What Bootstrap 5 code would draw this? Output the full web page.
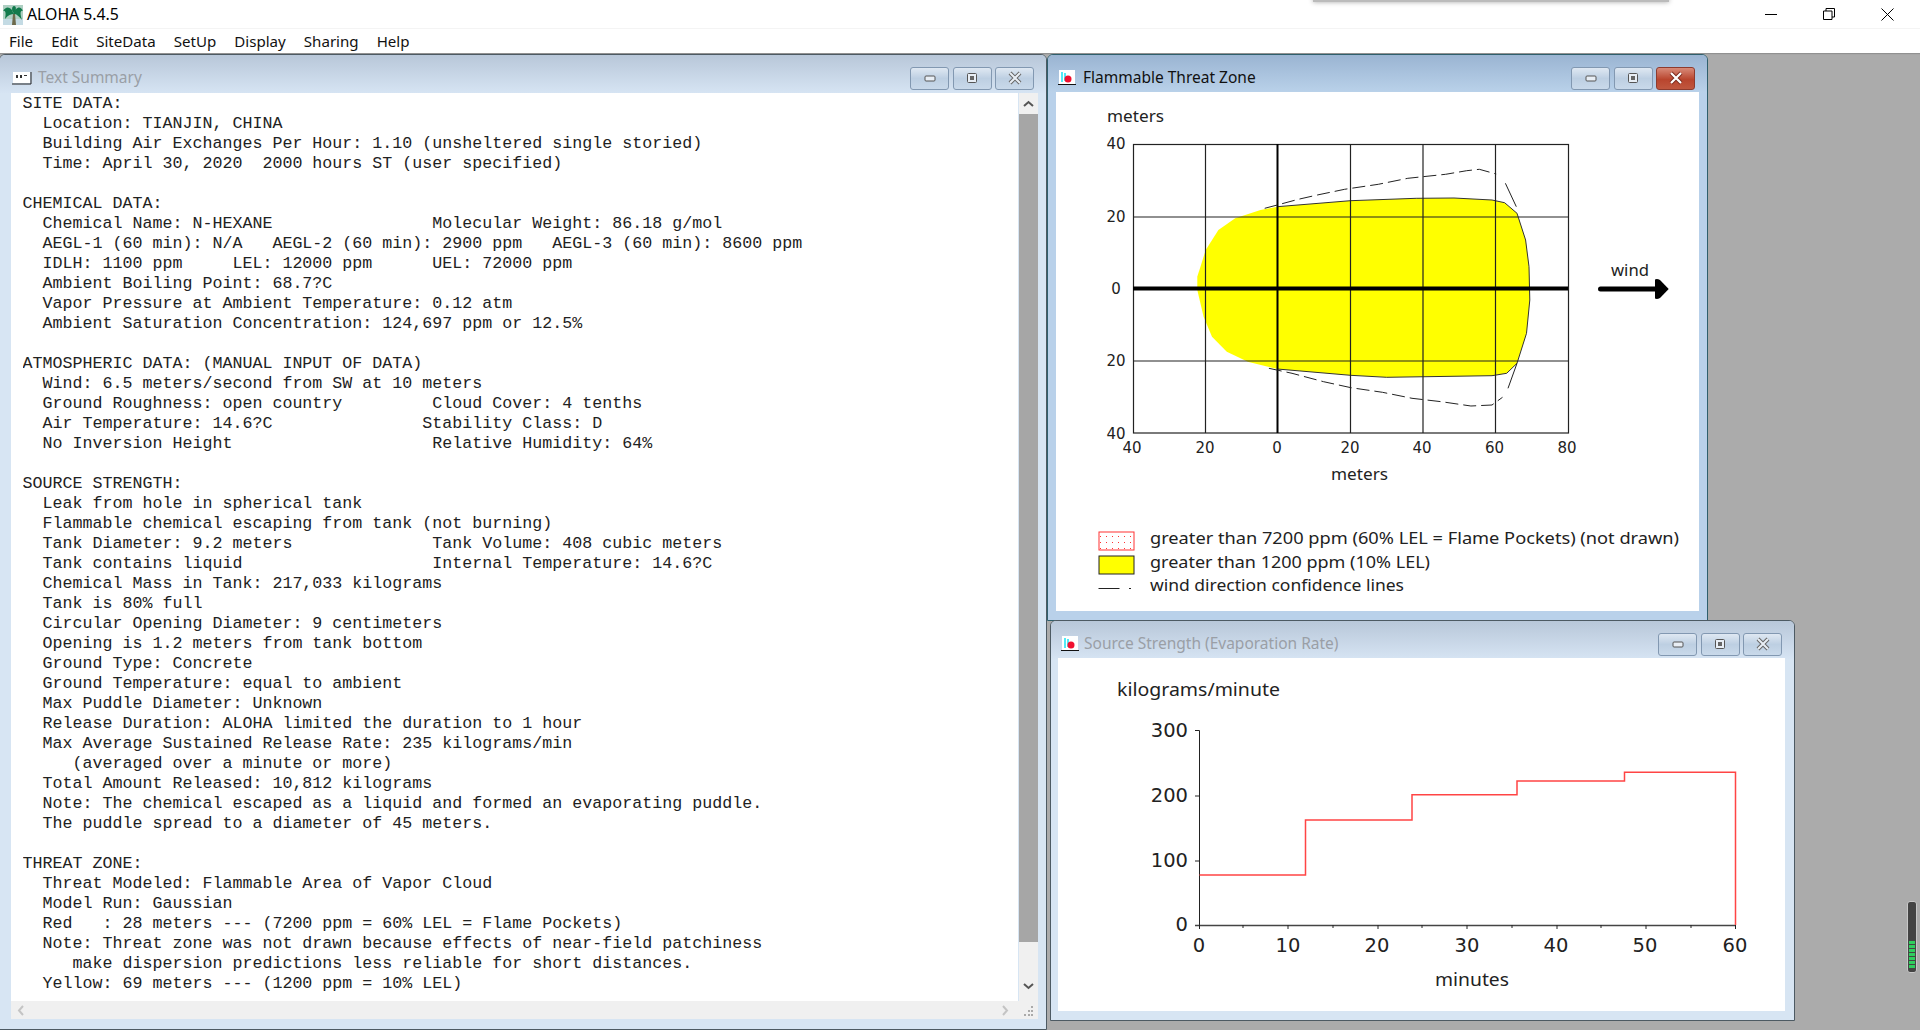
<!doctype html>
<html lang="en">
<head>
<meta charset="utf-8">
<title>ALOHA 5.4.5</title>
<link href="https://cdn.jsdelivr.net/npm/bootstrap@5.3.0/dist/css/bootstrap.min.css" rel="stylesheet">
<style>
html,body{height:100%;overflow:hidden}
body{background:#ababab;font-family:"Noto Sans","Liberation Sans",sans-serif;color:#111}
.appbar{height:53px;background:#fff;box-shadow:0 1px 1px rgba(0,0,0,.15);position:relative}
.captionrow{height:29px;border-bottom:1px solid #f4f4f4}
.appname{font-size:15.8px;margin-left:4px;line-height:28px;color:#000}
.palm{margin-left:3px;margin-top:1px}
.sysbtns{margin-right:26px;gap:46px}
.menurow{height:24px;padding-left:9px;gap:18px;font-size:15.1px;line-height:24px;color:#111}
.topshadow{position:absolute;left:1313px;top:-3px;width:356px;height:5px;background:#bbb;box-shadow:0 0 5px rgba(0,0,0,.35)}
.winframe{position:absolute;border:1px solid #4d5a63;border-radius:6px 6px 0 0;background:#d7e5f3;overflow:hidden}
.winframe.act{background:#b9d1ea;border-color:#2f5f6c}
.w-text{left:-1px;top:54px;width:1048px;height:976px}
.w-threat{left:1047px;top:54px;width:661px;height:567px}
.w-source{left:1050px;top:620px;width:745px;height:401px}
.titlebar{height:38px;background:linear-gradient(#b8c7d9,#d6e4f3);padding:8px 12px 0 10px;font-size:15.5px}
.act .titlebar{background:linear-gradient(#9ab4d2,#bad2ea)}
.titletext{color:#9a9fa6;margin-left:5px}
.act .titletext{color:#111;margin-left:7px}
.tsicon{margin-left:2px;margin-right:1px}
.tbtn{width:39px;height:23px;padding:0;border:1px solid #8298b1;border-radius:3px;background:linear-gradient(#dfe8f2,#bdcfe2 50%,#c9d9ea);display:flex;align-items:center;justify-content:center}
.tbtn.cl{background:linear-gradient(#d88a78,#b9452e 55%,#c0573f);border-color:#8e3b2e}
.tbtngroup{gap:3.5px}
.clientarea{position:absolute;background:#fff}
.c-text{left:11px;top:38px;width:1007px;height:908px;overflow:hidden;padding:1px 0 0 11.5px}
.c-threat{left:8px;top:37px;width:643px;height:519px}
.c-source{left:7px;top:37px;width:727px;height:353px}
.sumtext{font-family:"Liberation Mono","Courier New",monospace;font-size:16.67px;line-height:20px;color:#222;margin:0;overflow:hidden;white-space:pre}
.vscroll{position:absolute;left:1019px;top:38px;width:19px;height:908px;background:#f0f0f0}
.vthumb{position:absolute;left:0;right:0;top:21px;height:828px;background:#a6a6a6}
.hscroll{position:absolute;left:11px;top:946px;width:1027px;height:18px;background:#f0f0f0}
.scarrow{position:absolute}
.plot{display:block;width:100%;height:100%}
.plot text{font-family:"Noto Sans","Liberation Sans",sans-serif;fill:#222}
.plot .digits text{font-family:"DejaVu Sans",sans-serif}
.t15{font-size:15.5px}
.t18{font-size:18.5px}
.d14{font-size:15px}
.d19{font-size:19.5px}
.ledge{position:absolute;left:1907px;top:901px;width:10px;height:72px;background:#444;border:1px solid #c8c8c8;border-radius:3px;padding:39px 1px 2px;display:flex;flex-direction:column;gap:1px}
.ledbar{height:3px;background:#2fce5e}
</style>
</head>
<body>
<header class="appbar">
  <div class="topshadow"></div>
  <div class="captionrow d-flex align-items-center justify-content-between">
    <div class="d-flex align-items-center">
      <svg class="palm" width="20" height="20" viewBox="0 0 20 20" aria-hidden="true"><rect width="20" height="20" fill="#aecfc2"/><rect x="0" y="14" width="20" height="6" fill="#c4dbe4"/><path d="M9 20 L10 9 L12 9 L13 20Z" fill="#6d6a4c"/><path d="M11 9 C8 1 3 1 0 6 C3 5 3 9 2 14 C5 10 8 9 11 9Z M11 9 C13 1 18 1 20 6 C17 5 17 9 19 15 C15 10 13 9 11 9Z M11 9 C8 5 9 1 11 1 C14 1 13 6 11 9Z" fill="#127a4c"/></svg>
      <span class="appname">ALOHA 5.4.5</span>
    </div>
    <div class="sysbtns d-flex align-items-center">
      <svg width="12" height="12" viewBox="0 0 12 12" aria-hidden="true"><path d="M0 6.500H12" stroke="#000" fill="none"/></svg>
      <svg width="12" height="12" viewBox="0 0 12 12" aria-hidden="true"><path d="M.5 3h8.500v8.500H.5z M3 3V.5h8.500V9H9" stroke="#000" fill="none"/></svg>
      <svg width="13" height="13" viewBox="0 0 13 13" aria-hidden="true"><path d="M.5.5l12 12M12.500.5l-12 12" stroke="#000" fill="none"/></svg>
    </div>
  </div>
  <nav class="menurow d-flex">
    <span>File</span><span>Edit</span><span>SiteData</span><span>SetUp</span><span>Display</span><span>Sharing</span><span>Help</span>
  </nav>
</header>

<section class="winframe w-text">
  <div class="titlebar d-flex align-items-center">
    <svg width="20" height="14" viewBox="0 0 20 14" class="tsicon" aria-hidden="true"><rect x="1" y="1" width="17" height="11" fill="#fff"/><path d="M4 4h2v3H4zM8 4h2v3H8zM12 4h3v1h-3z" fill="#333"/><path d="M0 13H19V1" stroke="#222" fill="none"/></svg>
    <span class="titletext">Text Summary</span>
    <div class="ms-auto tbtngroup d-flex">
      <div class="tbtn"><svg width="12" height="8" aria-hidden="true"><rect x="1" y="2" width="10" height="5" rx="1" fill="#e8eef5" stroke="#555"/></svg></div>
      <div class="tbtn"><svg width="12" height="12" aria-hidden="true"><rect x="1.500" y="1.500" width="9" height="9" rx="1" fill="#e8eef5" stroke="#555"/><rect x="4" y="4" width="4" height="4" fill="#666"/></svg></div>
      <div class="tbtn"><svg width="14" height="14" viewBox="0 0 14 14" aria-hidden="true"><path d="M2 2l10 10M12 2L2 12" stroke="#666" stroke-width="4"/><path d="M2 2l10 10M12 2L2 12" stroke="#e8eef5" stroke-width="2"/></svg></div>
    </div>
  </div>
  <div class="clientarea c-text">
<pre class="sumtext">SITE DATA:
  Location: TIANJIN, CHINA
  Building Air Exchanges Per Hour: 1.10 (unsheltered single storied)
  Time: April 30, 2020  2000 hours ST (user specified)

CHEMICAL DATA:
  Chemical Name: N-HEXANE                Molecular Weight: 86.18 g/mol
  AEGL-1 (60 min): N/A   AEGL-2 (60 min): 2900 ppm   AEGL-3 (60 min): 8600 ppm
  IDLH: 1100 ppm     LEL: 12000 ppm      UEL: 72000 ppm
  Ambient Boiling Point: 68.7?C
  Vapor Pressure at Ambient Temperature: 0.12 atm
  Ambient Saturation Concentration: 124,697 ppm or 12.5%

ATMOSPHERIC DATA: (MANUAL INPUT OF DATA)
  Wind: 6.5 meters/second from SW at 10 meters
  Ground Roughness: open country         Cloud Cover: 4 tenths
  Air Temperature: 14.6?C               Stability Class: D
  No Inversion Height                    Relative Humidity: 64%

SOURCE STRENGTH:
  Leak from hole in spherical tank
  Flammable chemical escaping from tank (not burning)
  Tank Diameter: 9.2 meters              Tank Volume: 408 cubic meters
  Tank contains liquid                   Internal Temperature: 14.6?C
  Chemical Mass in Tank: 217,033 kilograms
  Tank is 80% full
  Circular Opening Diameter: 9 centimeters
  Opening is 1.2 meters from tank bottom
  Ground Type: Concrete
  Ground Temperature: equal to ambient
  Max Puddle Diameter: Unknown
  Release Duration: ALOHA limited the duration to 1 hour
  Max Average Sustained Release Rate: 235 kilograms/min
     (averaged over a minute or more)
  Total Amount Released: 10,812 kilograms
  Note: The chemical escaped as a liquid and formed an evaporating puddle.
  The puddle spread to a diameter of 45 meters.

THREAT ZONE:
  Threat Modeled: Flammable Area of Vapor Cloud
  Model Run: Gaussian
  Red   : 28 meters --- (7200 ppm = 60% LEL = Flame Pockets)
  Note: Threat zone was not drawn because effects of near-field patchiness
     make dispersion predictions less reliable for short distances.
  Yellow: 69 meters --- (1200 ppm = 10% LEL)</pre>
  </div>
  <div class="vscroll">
    <svg class="scarrow" style="left:4px;top:6px" width="11" height="9" aria-hidden="true"><path d="M1 7l4.500-4 4.500 4" stroke="#555" stroke-width="2" fill="none"/></svg>
    <div class="vthumb"></div>
    <svg class="scarrow" style="left:4px;top:889px" width="11" height="9" aria-hidden="true"><path d="M1 2l4.500 4 4.500-4" stroke="#555" stroke-width="2" fill="none"/></svg>
  </div>
  <div class="hscroll">
    <svg class="scarrow" style="left:5px;top:4px" width="9" height="11" aria-hidden="true"><path d="M7 1L3 5.500l4 4.500" stroke="#c4c4c4" stroke-width="2" fill="none"/></svg>
    <svg class="scarrow" style="left:990px;top:4px" width="9" height="11" aria-hidden="true"><path d="M2 1l4 4.500-4 4.500" stroke="#c4c4c4" stroke-width="2" fill="none"/></svg>
    <svg class="scarrow" style="left:1012px;top:5px" width="11" height="11" aria-hidden="true"><path d="M8 0h2v2H8zM5 4h2v2H5zM8 4h2v2H8zM1 8h2v2H1zM5 8h2v2H5zM8 8h2v2H8z" fill="#aaa"/></svg>
  </div>
</section>

<section class="winframe act w-threat">
  <div class="titlebar d-flex align-items-center">
    <svg width="18" height="16" viewBox="0 0 18 16" aria-hidden="true"><rect x="1" y="0" width="16" height="14" fill="#fff"/><path d="M4 2v10M7 3v8" stroke="#19e3f2" stroke-width="1.500"/><circle cx="10" cy="9" r="3.500" fill="#f01030"/><path d="M0 14.500H18" stroke="#111"/></svg>
    <span class="titletext">Flammable Threat Zone</span>
    <div class="ms-auto tbtngroup d-flex">
      <div class="tbtn"><svg width="12" height="8" aria-hidden="true"><rect x="1" y="2" width="10" height="5" rx="1" fill="#e8eef5" stroke="#555"/></svg></div>
      <div class="tbtn"><svg width="12" height="12" aria-hidden="true"><rect x="1.500" y="1.500" width="9" height="9" rx="1" fill="#e8eef5" stroke="#555"/><rect x="4" y="4" width="4" height="4" fill="#666"/></svg></div>
      <div class="tbtn cl"><svg width="14" height="14" viewBox="0 0 14 14" aria-hidden="true"><path d="M2 2l10 10M12 2L2 12" stroke="#7a2a1e" stroke-width="4"/><path d="M2 2l10 10M12 2L2 12" stroke="#fff" stroke-width="2.200"/></svg></div>
    </div>
  </div>
  <div class="clientarea c-threat">
    <svg class="plot" viewBox="1056 92 643 519" aria-label="Flammable threat zone plot">
      <path d="M1277.300 206.700L1350.500 200.700 1416.200 198.300 1454 198 1492 200 1504.600 202.700 1517 213.300 1525.600 240 1529 266.700 1529.800 300 1526.500 333.300 1517 363.300 1506.700 373.300 1492 375.700 1386.700 377.300 1350.500 375.300 1277.300 369 1247.800 361.700 1226.800 351.700 1212 336.700 1203.600 316.700 1197.300 290 1197.300 276.700 1205.700 250 1218.400 230 1235.200 218.300 1260.500 210Z" fill="#ffff00"/>
      <path d="M1277.300 206.700L1350.500 200.700 1416.200 198.300 1454 198 1492 200 1504.600 202.700 1517 213.300 1525.600 240 1529 266.700 1529.800 300 1526.500 333.300 1517 363.300 1506.700 373.300 1492 375.700 1386.700 377.300 1350.500 375.300 1277.300 369" fill="none" stroke="#333" stroke-width="1"/>
      <rect x="1133.500" y="144.500" width="435" height="288.500" fill="none" stroke="#222" stroke-width="1.200"/>
      <path d="M1205.500 144V433M1350.500 144V433M1423 144V433M1495.500 144V433M1133 217H1568M1133 361H1568" stroke="#222" stroke-width="1.200" fill="none"/>
      <path d="M1277.500 144V433" stroke="#000" stroke-width="2"/>
      <path d="M1133 288.500H1568" stroke="#000" stroke-width="4"/>
      <path d="M1264.700 208.300L1277.300 205 1298.300 199.300 1317.300 195 1344.600 189.300 1378.300 184.300 1407.800 178.300 1445.600 174.300 1466.700 170.700 1479.300 169.300 1496.200 174" fill="none" stroke="#222" stroke-width="1" stroke-dasharray="13 5"/>
      <path d="M1505.400 183.300L1516.300 206.700" fill="none" stroke="#222"/>
      <path d="M1268.900 368.300L1292 373.300 1323.600 381.700 1351 387.700 1382.500 392.300 1412 398.300 1441.400 401.700 1470.900 406 1492 405 1502.500 397.300" fill="none" stroke="#222" stroke-width="1" stroke-dasharray="13 5"/>
      <path d="M1508 388.300L1517 363.300" fill="none" stroke="#222"/>
      <g class="digits d14" text-anchor="middle">
        <text x="1116" y="149">40</text><text x="1116" y="222">20</text><text x="1116" y="294">0</text><text x="1116" y="366">20</text><text x="1116" y="439">40</text>
        <text x="1132" y="453">40</text><text x="1205" y="453">20</text><text x="1277" y="453">0</text><text x="1350" y="453">20</text><text x="1422" y="453">40</text><text x="1494.500" y="453">60</text><text x="1567" y="453">80</text>
      </g>
      <g class="t15">
        <text x="1107" y="122" textLength="57" lengthAdjust="spacingAndGlyphs">meters</text>
        <text x="1331" y="480" textLength="57" lengthAdjust="spacingAndGlyphs">meters</text>
        <text x="1611" y="276" textLength="38" lengthAdjust="spacingAndGlyphs">wind</text>
        <text x="1150" y="544" textLength="529" lengthAdjust="spacingAndGlyphs">greater than 7200 ppm (60% LEL = Flame Pockets) (not drawn)</text>
        <text x="1150" y="568" textLength="280" lengthAdjust="spacingAndGlyphs">greater than 1200 ppm (10% LEL)</text>
        <text x="1150" y="591" textLength="254" lengthAdjust="spacingAndGlyphs">wind direction confidence lines</text>
      </g>
      <path d="M1600.500 289H1656" stroke="#000" stroke-width="5" stroke-linecap="round"/>
      <path d="M1655 279.500Q1657 278.500 1660 280L1668.700 289 1660 298Q1657 299.500 1655 298.500Z" fill="#000"/>
      <defs><pattern id="dots" width="6" height="6" patternUnits="userSpaceOnUse"><rect x="2" y="2" width="1" height="1" fill="#f33"/></pattern></defs>
      <rect x="1099" y="532" width="35" height="18" fill="url(#dots)" stroke="#f33" stroke-width="1"/>
      <rect x="1099" y="556" width="35" height="18" fill="#ffff00" stroke="#222" stroke-width="1"/>
      <path d="M1098.500 588.500H1119.500M1129 588.500H1131" stroke="#222" stroke-width="1"/>
    </svg>
  </div>
</section>

<section class="winframe w-source">
  <div class="titlebar d-flex align-items-center">
    <svg width="18" height="16" viewBox="0 0 18 16" aria-hidden="true"><rect x="1" y="0" width="16" height="14" fill="#fff"/><path d="M4 2v10M7 3v8" stroke="#19e3f2" stroke-width="1.500"/><circle cx="10" cy="9" r="3.500" fill="#f01030"/><path d="M0 14.500H18" stroke="#111"/></svg>
    <span class="titletext">Source Strength (Evaporation Rate)</span>
    <div class="ms-auto tbtngroup d-flex">
      <div class="tbtn"><svg width="12" height="8" aria-hidden="true"><rect x="1" y="2" width="10" height="5" rx="1" fill="#e8eef5" stroke="#555"/></svg></div>
      <div class="tbtn"><svg width="12" height="12" aria-hidden="true"><rect x="1.500" y="1.500" width="9" height="9" rx="1" fill="#e8eef5" stroke="#555"/><rect x="4" y="4" width="4" height="4" fill="#666"/></svg></div>
      <div class="tbtn"><svg width="14" height="14" viewBox="0 0 14 14" aria-hidden="true"><path d="M2 2l10 10M12 2L2 12" stroke="#666" stroke-width="4"/><path d="M2 2l10 10M12 2L2 12" stroke="#e8eef5" stroke-width="2"/></svg></div>
    </div>
  </div>
  <div class="clientarea c-source">
    <svg class="plot" viewBox="1058 658 727 353" aria-label="Source strength chart">
      <path d="M1199.500 730.500V925M1195 730.500H1199.500M1195 796H1199.500M1195 861H1199.500" stroke="#222" fill="none"/>
      <path d="M1195 925.500H1735.500" stroke="#444" stroke-width="1.500"/>
      <path d="M1199.500 925v4M1243 925v3M1288 925v4M1333 925v3M1378 925v4M1422 925v3M1467 925v4M1512 925v3M1557 925v4M1601 925v3M1646 925v4M1691 925v3M1735.500 925v4" stroke="#222" fill="none"/>
      <path d="M1199.500 875H1305.500V820H1412V794.700H1517V781H1624.500V772.300H1735.500V925" fill="none" stroke="#f44" stroke-width="1.500"/>
      <g class="t18">
        <text x="1117" y="696" textLength="163" lengthAdjust="spacingAndGlyphs">kilograms/minute</text>
        <text x="1435" y="986" textLength="74" lengthAdjust="spacingAndGlyphs">minutes</text>
      </g>
      <g class="digits d19">
        <g text-anchor="end"><text x="1188" y="737">300</text><text x="1188" y="802">200</text><text x="1188" y="867">100</text><text x="1188" y="931">0</text></g>
        <g text-anchor="middle"><text x="1199" y="952">0</text><text x="1288" y="952">10</text><text x="1377" y="952">20</text><text x="1467" y="952">30</text><text x="1556" y="952">40</text><text x="1645" y="952">50</text><text x="1735" y="952">60</text></g>
      </g>
    </svg>
  </div>
</section>

<div class="ledge">
  <div class="ledbar"></div><div class="ledbar"></div><div class="ledbar"></div><div class="ledbar"></div><div class="ledbar"></div><div class="ledbar"></div><div class="ledbar"></div>
</div>
<script src="https://cdn.jsdelivr.net/npm/bootstrap@5.3.0/dist/js/bootstrap.bundle.min.js"></script>
</body>
</html>
